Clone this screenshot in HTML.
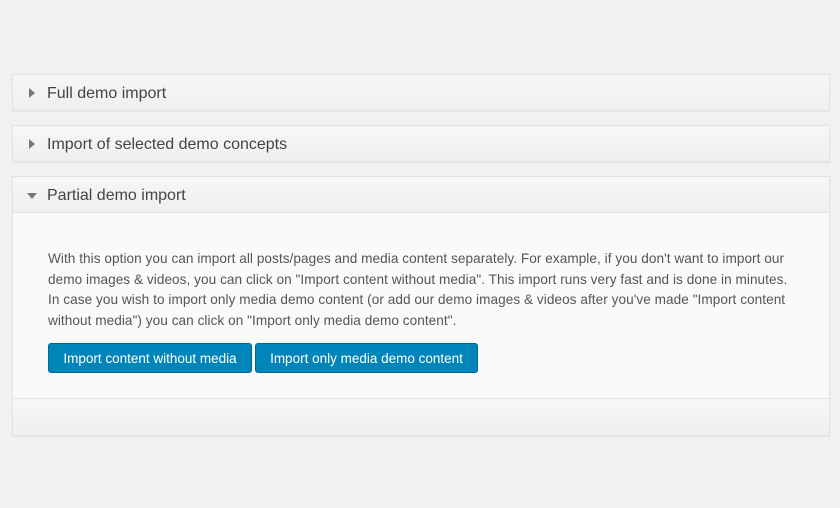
<!DOCTYPE html>
<html><head><style>
body{margin:0;width:840px;height:508px;background:#f1f1f1;font-family:"Liberation Sans",sans-serif;position:relative;overflow:hidden}
.p{position:absolute;left:12px;width:816px;border:1px solid #e2e2e2;box-shadow:0 1px 1px rgba(0,0,0,.05);background:#fafafa}
.h{height:35px;background:linear-gradient(#f7f7f7,#efefef);border-bottom:1px solid #e4e4e4;position:relative;font-size:16px;color:#444;line-height:37px;padding-left:34px}
.tr{position:absolute;left:16px;top:13px;width:0;height:0;border-top:5px solid transparent;border-bottom:5px solid transparent;border-left:6px solid #777}
.td{position:absolute;left:14px;top:16px;width:0;height:0;border-left:5px solid transparent;border-right:5px solid transparent;border-top:6px solid #777}
.t{position:absolute;left:35px;top:72px;font-size:13.6px;color:#555;line-height:20.5px;white-space:nowrap;letter-spacing:0.05px}
.b{position:absolute;top:166px;height:30px;background:#0085ba;border:1px solid #006799;border-radius:3px;color:#fff;font-size:13.5px;line-height:29px;text-align:center;box-sizing:border-box}
.f{position:absolute;left:0;right:0;top:221px;height:36px;border-top:1px solid #e4e4e4;background:linear-gradient(#f7f7f7,#efefef)}
</style></head><body>
<div class="p" style="top:74px;height:35px"><div class="h" style="border:0"><span class="tr"></span>Full demo import</div></div>
<div class="p" style="top:125px;height:35px"><div class="h" style="border:0"><span class="tr"></span>Import of selected demo concepts</div></div>
<div class="p" style="top:176px;height:258px">
<div class="h"><span class="td"></span>Partial demo import</div>
<div class="t">With this option you can import all posts/pages and media content separately. For example, if you don't want to import our<br>demo images &amp; videos, you can click on "Import content without media". This import runs very fast and is done in minutes.<br>In case you wish to import only media demo content (or add our demo images &amp; videos after you've made "Import content<br>without media") you can click on "Import only media demo content".</div>
<div class="b" style="left:35px;width:204px">Import content without media</div>
<div class="b" style="left:242px;width:223px">Import only media demo content</div>
<div class="f"></div>
</div>
</body></html>
